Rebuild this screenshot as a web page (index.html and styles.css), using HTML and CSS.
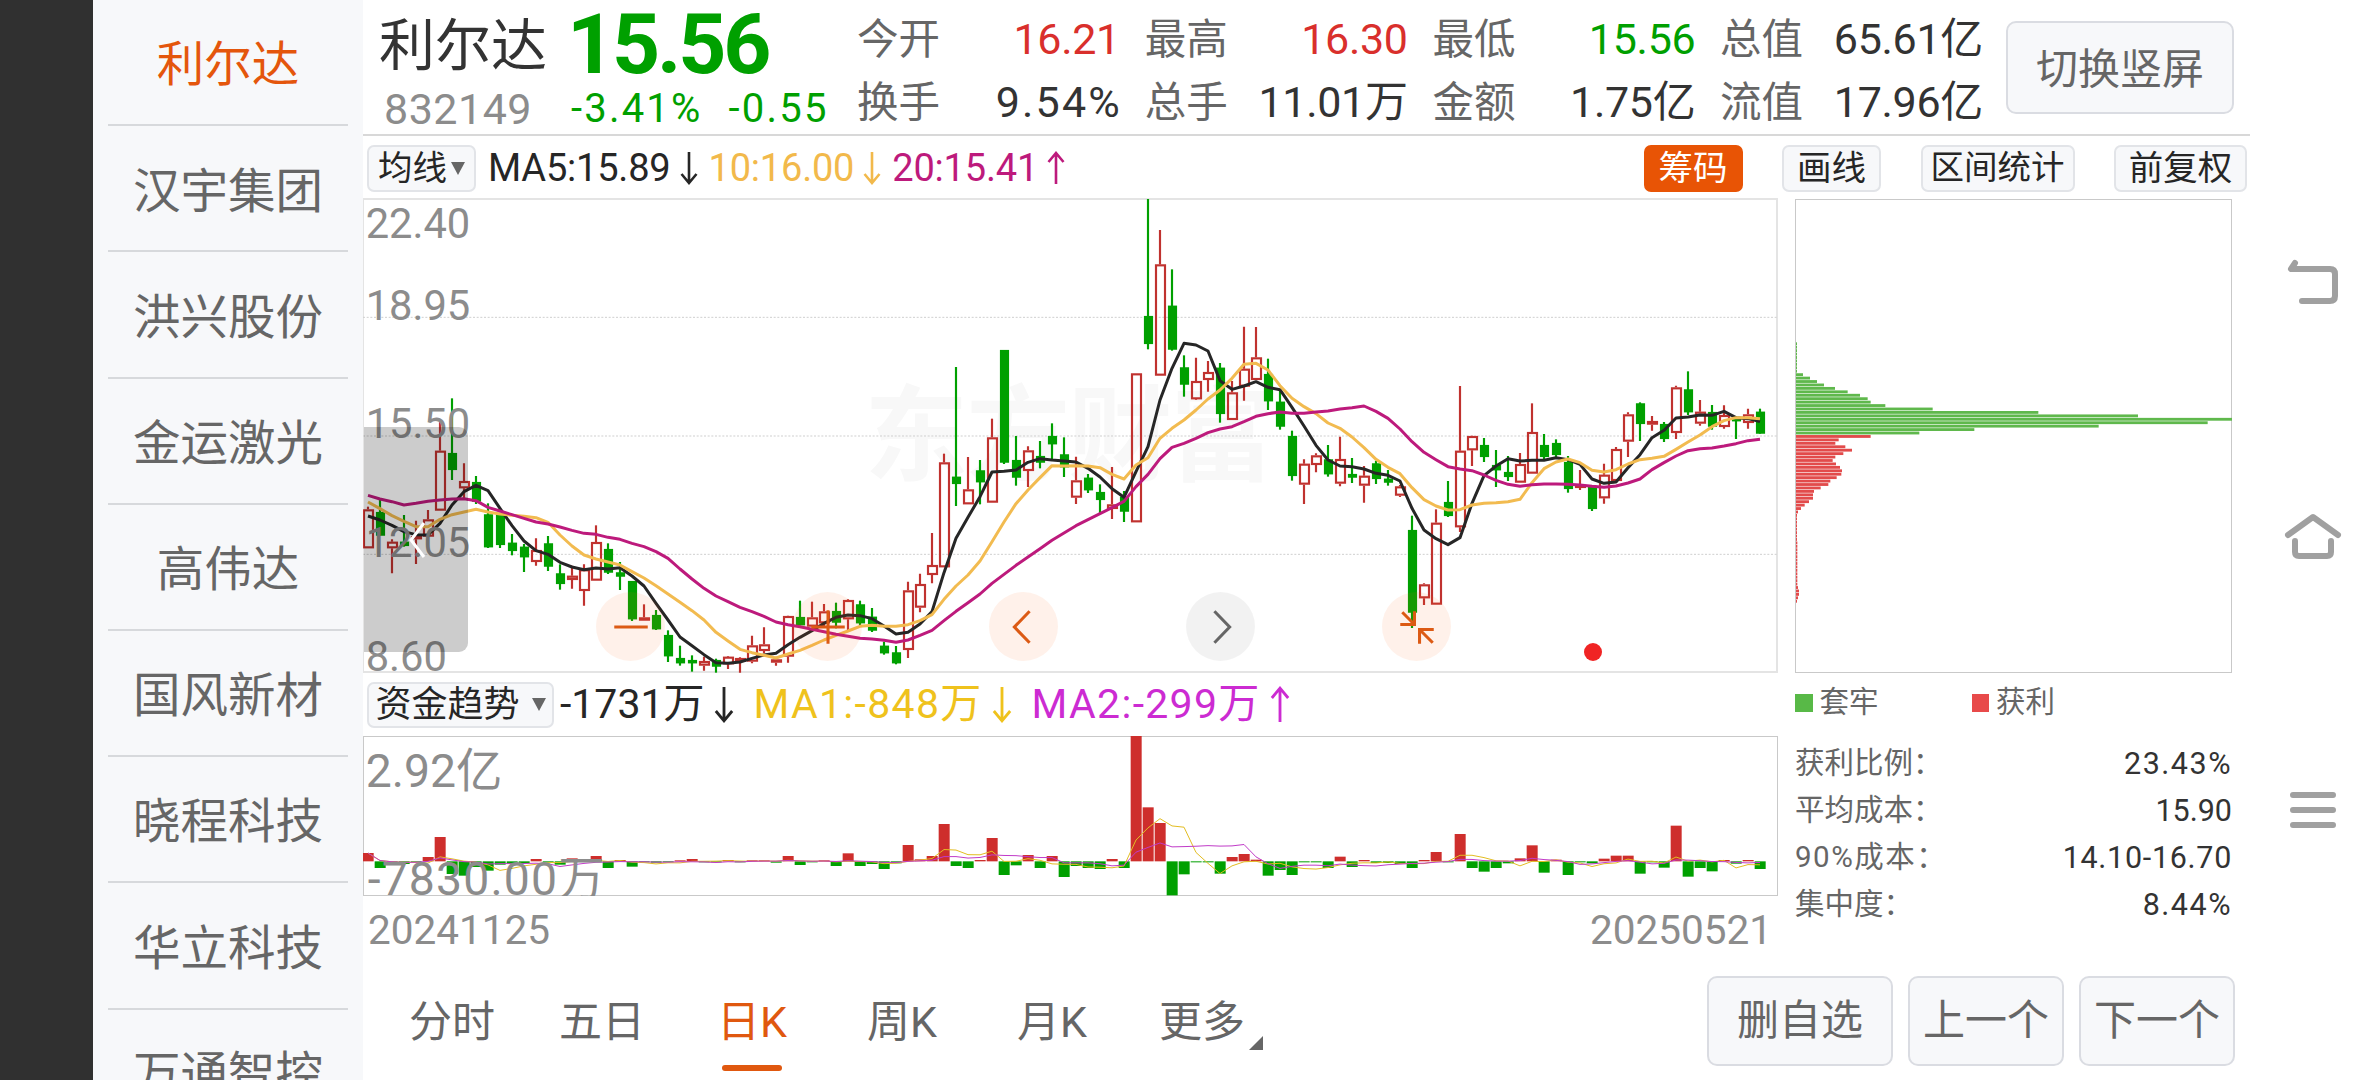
FILE: index.html
```html
<!DOCTYPE html>
<html lang="zh-CN">
<head>
    <meta charset="UTF-8">
    <meta name="viewport" content="width=device-width, initial-scale=1.0">
    <title>利尔达 832149</title>
    <link rel="stylesheet" href="styles.css">
</head>
<body>
    <svg class="symbols" width="0" height="0">
        <symbol id="down" viewBox="0 0 18 34"><path d="M9 1v31M1.5 23L9 32l7.500-9" fill="none" stroke="currentColor" stroke-width="2.600"/></symbol>
        <symbol id="up" viewBox="0 0 18 34"><path d="M9 33V2M1.500 11L9 2l7.500 9" fill="none" stroke="currentColor" stroke-width="2.600"/></symbol>
    </svg>

    <div class="screen">
        <div class="cutout"></div>

        <ul class="stock-list">
            <li class="active">利尔达</li>
            <li>汉宇集团</li>
            <li>洪兴股份</li>
            <li>金运激光</li>
            <li>高伟达</li>
            <li>国风新材</li>
            <li>晓程科技</li>
            <li>华立科技</li>
            <li>万通智控</li>
        </ul>

        <div class="main">
            <header class="quote">
                <div class="stock">
                    <div class="stock-name">利尔达</div>
                    <div class="stock-code">832149</div>
                </div>
                <div class="price-box green">
                    <div class="price">15.56</div>
                    <div class="change"><span>-3.41%</span><span>-0.55</span></div>
                </div>
                <div class="stats">
                    <div class="stat"><span>今开</span><b class="red">16.21</b></div>
                    <div class="stat"><span>最高</span><b class="red">16.30</b></div>
                    <div class="stat"><span>最低</span><b class="green">15.56</b></div>
                    <div class="stat"><span>总值</span><b>65.61亿</b></div>
                    <div class="stat"><span>换手</span><b class="percent">9.54%</b></div>
                    <div class="stat"><span>总手</span><b>11.01万</b></div>
                    <div class="stat"><span>金额</span><b>1.75亿</b></div>
                    <div class="stat"><span>流值</span><b>17.96亿</b></div>
                </div>
                <button class="btn btn-rotate">切换竖屏</button>
            </header>

            <div class="toolbar">
                <button class="tag tag-ma">均线<i class="caret"></i></button>
                <div class="ma-values">
                    <span class="ma5">MA5:15.89<svg class="arrow"><use href="#down"/></svg></span>
                    <span class="ma10">10:16.00<svg class="arrow"><use href="#down"/></svg></span>
                    <span class="ma20">20:15.41<svg class="arrow"><use href="#up"/></svg></span>
                </div>
                <div class="tools">
                    <button class="tag tag-on">筹码</button>
                    <button class="tag tag-draw">画线</button>
                    <button class="tag tag-range">区间统计</button>
                    <button class="tag tag-adjust">前复权</button>
                </div>
            </div>

            <div class="content">
                <div class="charts">
                    <div class="kline">
                        <svg id="kline" viewBox="0 0 4242 1428"></svg>
                        <div class="drawer">
                            <svg viewBox="0 0 20 40"><path d="M17 3L4 20l13 17" fill="none" stroke="#fff" stroke-width="3"/></svg>
                        </div>
                        <div class="controls">
                            <span class="round"><svg viewBox="0 0 68 68"><path d="M18 34.500h33"/></svg></span>
                            <span class="round"><svg viewBox="0 0 68 68"><path d="M18 34.500h33M34.500 18v33"/></svg></span>
                            <span class="round"><svg viewBox="0 0 68 68"><path d="M40 19L25 34.500 40 50"/></svg></span>
                            <span class="round round-off"><svg viewBox="0 0 68 68"><path d="M28 19l15 15.500L28 50"/></svg></span>
                            <span class="round"><svg viewBox="0 0 68 68"><path d="M20 20l12 12M18 32h14V19M50 50L37 37M51 37H37v14"/></svg></span>
                        </div>
                        <span class="event-dot"></span>
                    </div>

                    <div class="fund-bar">
                        <button class="tag tag-fund">资金趋势<i class="caret"></i></button>
                        <div class="fund-values">
                            <span>-1731万<svg class="arrow"><use href="#down"/></svg></span>
                            <span class="fund-ma1">MA1:-848万<svg class="arrow"><use href="#down"/></svg></span>
                            <span class="fund-ma2">MA2:-299万<svg class="arrow"><use href="#up"/></svg></span>
                        </div>
                    </div>

                    <div class="fund">
                        <svg id="fund" viewBox="0 0 4242 480"></svg>
                    </div>
                    <div class="dates"><span>20241125</span><span>20250521</span></div>
                </div>

                <aside class="chips">
                    <div class="chips-chart"><svg id="chips" viewBox="0 0 1308 1419"></svg></div>
                    <div class="legend">
                        <span><i class="dot-green"></i>套牢</span>
                        <span><i class="dot-red"></i>获利</span>
                    </div>
                    <dl class="chips-info">
                        <div><dt>获利比例：</dt><dd class="percent">23.43%</dd></div>
                        <div><dt>平均成本：</dt><dd>15.90</dd></div>
                        <div><dt class="percent">90%成本：</dt><dd class="range">14.10-16.70</dd></div>
                        <div><dt>集中度：</dt><dd class="percent">8.44%</dd></div>
                    </dl>
                </aside>
            </div>

            <footer class="footer">
                <nav class="tabs">
                    <a>分时</a>
                    <a>五日</a>
                    <a class="active">日K</a>
                    <a>周K</a>
                    <a>月K</a>
                    <a class="more">更多</a>
                </nav>
                <div class="actions">
                    <button class="btn btn-del">删自选</button>
                    <button class="btn">上一个</button>
                    <button class="btn">下一个</button>
                </div>
            </footer>
        </div>

        <div class="sys-nav">
            <svg class="key-back" viewBox="0 0 60 60"><path d="M12 11L8 17h39q5 0 5 5v22q0 5-5 5H19"/></svg>
            <svg class="key-home" viewBox="0 0 60 60"><path d="M5 29L30 11l25 18M12 35v11q0 4 4 4h28q4 0 4-4V35"/></svg>
            <svg class="key-menu" viewBox="0 0 60 60"><path d="M10 15h40M10 30h40M10 45h40"/></svg>
        </div>
    </div>

    <script src="charts.js"></script>
</body>
</html>
```
FILE: styles.css
```css
* {
    box-sizing: border-box;
}
body {
    margin: 0;
    background: #fff;
    color: #333;
    font-family: Roboto, "Noto Sans CJK SC", sans-serif;
    line-height: 1;
    overflow: hidden;
}
button {
    font-family: inherit;
    line-height: 1;
    padding: 0;
}
.symbols {
    display: block;
}
.screen {
    display: flex;
    width: 2376px;
    height: 1080px;
    overflow: hidden;
}
.cutout {
    width: 93px;
    background: #303030;
}
.red {
    color: #d92f2c;
}
.green {
    color: #00a000;
}

/* left stock list */
.stock-list {
    width: 270px;
    margin: 0;
    padding: 0 15px;
    list-style: none;
    background: #f7f8fa;
}
.stock-list li {
    height: 126.200px;
    display: flex;
    align-items: center;
    justify-content: center;
    padding-top: 8px;
    border-bottom: 2px solid #d7d9dc;
    font-size: 47.500px;
    color: #666;
}
.stock-list .active {
    color: #e4560c;
}

.main {
    width: 1887px;
    display: flex;
    flex-direction: column;
}

/* quote header */
.quote {
    height: 136px;
    display: flex;
    border-bottom: 2px solid #d8d8d8;
}
.stock {
    width: 200px;
    padding: 17px 0 0 16px;
}
.stock-name {
    font-size: 56px;
    line-height: 58px;
    white-space: nowrap;
}
.stock-code {
    margin: 13px 0 0 5px;
    font-size: 43px;
    letter-spacing: 0.500px;
    color: #8c8c8c;
}
.price-box {
    width: 294px;
    padding: 2px 0 0 4px;
}
.price {
    font-size: 84px;
    line-height: 86px;
    font-weight: 700;
    letter-spacing: -3.200px;
}
.change {
    display: flex;
    gap: 26px;
    margin: 1px 0 0 4px;
    font-size: 40px;
    letter-spacing: 2.200px;
    white-space: nowrap;
}
.stats {
    display: grid;
    grid-template-columns: repeat(4, 263px);
    grid-template-rows: 63px 63px;
    column-gap: 24.700px;
    padding-top: 8px;
}
.stat {
    display: flex;
    align-items: center;
    justify-content: space-between;
}
.stat span {
    font-size: 41.500px;
    color: #666;
}
.stat b {
    font-size: 43px;
    font-weight: 400;
    letter-spacing: -0.300px;
}
.stat .percent {
    letter-spacing: 2.200px;
    margin-right: -2px;
}
.btn {
    border: 2px solid #dadce2;
    border-radius: 10px;
    background: #f7f8fa;
    color: #666;
    font-size: 42px;
}
.btn-rotate {
    width: 228px;
    height: 93px;
    margin: 21px 0 0 23px;
    padding-top: 5px;
}

/* indicator toolbar */
.toolbar {
    height: 62px;
    display: flex;
    align-items: center;
    padding: 2px 3px 0 4px;
}
.tag {
    height: 47px;
    display: flex;
    align-items: center;
    justify-content: center;
    border: 2px solid #e2e4e8;
    border-radius: 7px;
    background: #f7f8fa;
    color: #262626;
    font-size: 34.500px;
    white-space: nowrap;
}
.tag-on {
    width: 99px;
    border-color: #e85405;
    background: #e85405;
    color: #fff;
}
.tag-ma {
    width: 109px;
    gap: 4px;
}
.tag-draw {
    width: 99px;
}
.tag-range {
    width: 154px;
    font-size: 33.500px;
}
.tag-adjust {
    width: 133px;
}
.caret {
    border: 7.500px solid transparent;
    border-top: 13px solid #666;
    border-bottom: 0;
}
.ma-values {
    display: flex;
    gap: 11px;
    margin-left: 12px;
    font-size: 38px;
    letter-spacing: -0.200px;
}
.ma-values span,
.fund-values span {
    display: flex;
    align-items: center;
    gap: 9px;
    white-space: nowrap;
}
.arrow {
    width: 18px;
    height: 34px;
}
.ma5 {
    color: #262626;
}
.ma10 {
    color: #f2b94b;
}
.ma20 {
    color: #bd1a7c;
}
.tools {
    display: flex;
    gap: 39.500px;
    margin-left: auto;
}

.content {
    display: flex;
    gap: 17px;
}
.charts {
    width: 1415px;
}
.kline {
    position: relative;
    height: 475px;
    border: 2px solid #e4e4e4;
    border-left-width: 1px;
}
.kline > svg,
.fund > svg {
    display: block;
    width: 1414px;
    margin: -2px 0 0 -1px;
}

/* collapsed drawer over the left edge of the chart */
.drawer {
    position: absolute;
    left: 0;
    top: 227px;
    width: 104px;
    height: 225px;
    border-radius: 0 9px 9px 0;
    background: rgba(0, 0, 0, 0.2);
}
.drawer svg {
    position: absolute;
    left: 43px;
    top: 93px;
    width: 20px;
    height: 40px;
}
.controls {
    position: absolute;
    left: 232px;
    top: 392px;
    display: flex;
    gap: 127.600px;
}
.round {
    width: 69px;
    height: 69px;
    border-radius: 50%;
    background: rgba(250, 100, 20, 0.090);
    color: #dc5a14;
}
.round-off {
    background: rgba(0, 0, 0, 0.050);
    color: #666;
}
.round svg {
    display: block;
    fill: none;
    stroke: currentColor;
    stroke-width: 3;
}
.event-dot {
    position: absolute;
    left: 1220px;
    top: 443px;
    width: 18px;
    height: 18px;
    border-radius: 50%;
    background: #f02424;
}

/* fund trend */
.fund-bar {
    height: 63px;
    display: flex;
    align-items: center;
    padding: 0 4px;
}
.tag-fund {
    width: 187px;
    height: 46px;
    gap: 12px;
    font-size: 36px;
}
.fund-values {
    display: flex;
    gap: 20px;
    margin-left: 6px;
    font-size: 41px;
    color: #262626;
}
.fund-values .arrow {
    width: 20px;
    height: 37px;
}
.fund-ma1 {
    color: #efc21c;
    letter-spacing: 1.300px;
}
.fund-ma2 {
    color: #cc2bd2;
    letter-spacing: 1.300px;
}
.fund {
    height: 160px;
    border: 1px solid #c9c9c9;
}
.fund > svg {
    margin: -1px 0 0 -1px;
}
.dates {
    display: flex;
    justify-content: space-between;
    padding: 14px 6px 0 5px;
    font-size: 40.500px;
    color: #8c8c8c;
}

/* chip distribution */
.chips {
    width: 437px;
    padding-top: 1px;
}
.chips-chart {
    height: 474px;
    border: 1px solid #c9c9c9;
}
.chips-chart svg {
    display: block;
    width: 436px;
}
.legend {
    display: flex;
    gap: 93px;
    margin-top: 15px;
    font-size: 29.500px;
    color: #666;
}
.legend span {
    display: flex;
    align-items: center;
    gap: 7px;
}
.legend i {
    width: 17.500px;
    height: 17.500px;
}
.dot-green {
    background: #58b947;
}
.dot-red {
    background: #e84a4a;
}
.chips-info {
    margin: 23px 0 0;
}
.chips-info div {
    height: 47px;
    display: flex;
    align-items: center;
    justify-content: space-between;
}
.chips-info dt {
    font-size: 29.500px;
    color: #666;
}
.chips-info dd {
    margin: 0;
    font-size: 30.500px;
}
.chips-info .percent {
    letter-spacing: 1.500px;
}
.chips-info .range {
    letter-spacing: 0.700px;
}

/* period tabs and actions */
.footer {
    height: 104px;
    display: flex;
    justify-content: space-between;
    margin-top: auto;
    padding: 0 15px 0 14px;
}
.tabs {
    display: flex;
}
.tabs a {
    position: relative;
    width: 150px;
    height: 92px;
    display: flex;
    align-items: center;
    justify-content: center;
    font-size: 43px;
    color: #666;
}
.tabs .active {
    color: #e0580f;
}
.tabs .active::after {
    content: "";
    position: absolute;
    left: 45px;
    bottom: -3px;
    width: 60px;
    height: 6px;
    border-radius: 3px;
    background: #e0580f;
}
.tabs .more::after {
    content: "";
    position: absolute;
    right: 14px;
    bottom: 18px;
    border-left: 14px solid transparent;
    border-bottom: 14px solid #666;
}
.actions {
    display: flex;
    gap: 15px;
}
.actions .btn {
    width: 156px;
    height: 90px;
}
.actions .btn-del {
    width: 186px;
}

/* system navigation keys */
.sys-nav {
    width: 126px;
    display: flex;
    flex-direction: column;
    align-items: center;
}
.sys-nav svg {
    width: 60px;
    height: 60px;
    flex: none;
    fill: none;
    stroke: #a0a0a0;
    stroke-width: 6;
    stroke-linecap: round;
    stroke-linejoin: round;
}
.key-back {
    margin-top: 252px;
}
.key-home {
    margin-top: 194px;
}
.key-menu {
    margin-top: 214px;
}

/* chart parts, units are a third of a pixel */
.grid {
    stroke: #cfcfcf;
    stroke-width: 3;
    stroke-dasharray: 6 5;
}
.watermark {
    font: 700 312px "Noto Sans CJK SC", sans-serif;
    fill: #f8f8f8;
}
.axis {
    font-size: 125px;
    fill: #8c8c8c;
}
.fund-axis {
    font-size: 139px;
    fill: #8c8c8c;
}
.fund-low {
    letter-spacing: 3.500px;
}
.up {
    fill: none;
    stroke: #c0322f;
    stroke-width: 6.500px;
}
.down {
    fill: #00a000;
    stroke: #00a000;
    stroke-width: 6.500px;
}
.line {
    fill: none;
    stroke-width: 9px;
    stroke-linejoin: round;
}
.line-thin {
    fill: none;
    stroke-width: 3px;
}
```
FILE: charts.js
```javascript
const NS = "http://www.w3.org/2000/svg";
const STEP = 36;
const FIRST = 15;

function add(parent, tag, attrs, text) {
    const el = document.createElementNS(NS, tag);
    for (const key in attrs) el.setAttribute(key, attrs[key]);
    if (text) el.textContent = text;
    parent.appendChild(el);
    return el;
}

function xAt(i) {
    return FIRST + i * STEP;
}

// [type, high, body top, body bottom, low], every block has its own base offset
const candles = [
    { base: 546, rows: [
        ["r",380,388,505,505],["g",360,396,467,467],["r",478,485,505,580],["g",405,485,498,500],
        ["r",422,468,478,552],["r",390,418,470,470],["r",126,212,392,392],["g",55,219,270,300],
        ["r",250,303,325,360],["g",288,306,365,372],["g",370,403,502,504],["g",400,403,495,504],
        ["g",462,488,513,526],["g",492,500,532,576],["r",475,510,546,557],["g",468,490,560,573],
        ["g",553,580,612,629],["r",557,587,600,626],["r",553,568,633,677],["r",436,486,602,602],
        ["g",490,507,578,582],["g",546,577,590,630],["g",603,603,718,723],["r",673,712,722,722],
        ["g",690,705,748,750],["g",751,765,829,846],["g",797,834,850,857],["g",826,840,850,875],
        ["r",830,843,857,872],["g",836,840,860,878],["r",828,830,853,867],["r",832,834,845,878]
    ] },
    { base: 396, rows: [
        ["r",917,946,995,1000],["r",892,943,963,970],["r",980,988,998,1007],["r",857,858,980,998],
        ["g",812,861,886,886],["r",815,862,890,890],["r",822,844,880,890],["g",818,843,878,895],
        ["r",808,810,868,905],["g",812,823,880,888],["g",834,860,902,906],["g",935,947,970,974],
        ["g",948,967,1000,1003],["r",755,781,960,984],["r",731,762,833,847],["r",609,705,735,760],
        ["r",371,397,712,712],["g",111,440,462,528],["r",381,478,523,523],["g",390,421,457,523],
        ["r",266,322,518,518],["g",60,60,398,402],["g",318,390,443,467],["r",349,361,423,471],
        ["g",333,378,398,415],["g",280,318,343,390],["g",322,373,412,441],["r",380,451,503,522],
        ["g",432,443,481,489],["g",463,486,510,550],["r",411,523,537,567],["g",483,500,545,576],
        ["r",130,130,577,577]
    ] },
    { base: -24, rows: [
        ["g",27,378,462,478],["r",120,223,557,557],["g",238,347,479,482],["g",496,532,584,620],
        ["r",503,573,628,630],["r",513,546,570,605],["g",519,533,672,698],["r",573,607,690,690],
        ["r",410,536,590,632],["r",411,502,570,570],["g",506,552,634,660],["g",600,635,710,719],
        ["g",722,738,858,872],["r",808,821,884,942],["r",790,796,825,847],["g",765,808,853,860],
        ["r",740,807,881,889],["g",804,852,863,879],["r",828,857,887,938],["g",812,820,867,882],
        ["g",840,866,878,887],["r",885,889,917,921],["g",977,1020,1268,1314],["r",1180,1183,1225,1245]
    ] },
    { base: 456, rows: [
        ["r",478,518,764,764],["g",393,456,498,501],["r",108,302,532,546],["r",257,258,301,348],
        ["g",264,285,321,336],["g",300,345,361,411],["g",318,366,381,393],["r",309,342,398,398],
        ["r",160,246,371,371],["g",252,285,321,327],["g",268,279,315,325],["g",318,336,417,428],
        ["r",360,405,413,420],["g",405,408,477,483],["r",341,374,445,461],["r",291,297,393,397],
        ["r",187,193,275,321],["g",157,160,222,273],["r",198,213,224,242],["g",216,222,267,276],
        ["r",107,112,249,267],["g",64,118,187,195],["r",150,185,221,227],["g",165,186,230,239],
        ["r",166,195,231,236],["g",200,205,212,267],["r",176,193,219,236],["g",176,185,251,251]
    ] }
];

const averages = [
    { color: "#262626", parts: [
        [546, [408,420,436,455,464,465,430,375,335,316,332,385,437,483,512,523,547,561,569,564,567,563,588,618,670,720,771,797,824,848,850,846]],
        [396, [985,975,970,944,922,902,880,862,855,857,866,888,912,907,882,845,728,625,562,500,426,424,420,397,386,390,393,396,415,441,476,502,425]],
        [-24, [770,630,535,460,465,483,572,598,588,575,592,599,652,708,766,810,828,830,837,850,856,873,955,1020]],
        [456, [566,584,563,460,377,348,326,333,331,331,323,329,343,387,400,396,353,314,263,241,204,201,195,196,184,203,206,215]]
    ] },
    { color: "#f2bb50", parts: [
        [546, [366,386,407,424,440,440,418,404,396,388,396,402,406,409,413,427,465,498,525,537,546,555,575,594,617,642,667,692,720,757,783,808]],
        [396, [968,976,984,972,961,946,930,916,903,889,886,889,889,884,872,854,808,768,735,693,635,576,521,480,443,407,408,407,408,413,433,447,405]],
        [-24, [803,745,715,690,660,627,600,565,523,520,540,587,625,650,671,699,715,741,773,808,832,851,893,929]],
        [456, [468,480,479,465,460,458,455,448,398,356,336,327,338,361,366,359,342,329,325,319,298,276,255,230,212,203,203,206]]
    ] },
    { color: "#bd1a7c", parts: [
        [546, [346,357,365,375,370,364,360,357,356,362,382,393,404,415,426,432,441,451,460,463,472,478,490,500,515,535,567,597,625,648,665,682]],
        [396, [845,859,876,884,890,898,905,913,919,925,927,931,937,930,916,901,872,844,818,792,760,733,706,681,656,631,609,587,569,551,533,514,470]],
        [-24, [853,806,772,760,745,728,717,710,695,679,671,666,670,670,666,663,657,653,648,664,685,717,755,787]],
        [456, [329,350,357,362,375,391,403,409,404,402,402,403,405,409,412,408,399,387,359,338,318,302,296,294,288,281,272,268]]
    ] }
];

function drawKline() {
    const svg = document.getElementById("kline");
    add(svg, "text", { x: 1504, y: 825, class: "watermark", textLength: 1230 }, "东方财富");
    [358, 714, 1069].forEach(y => add(svg, "line", { x1: 0, x2: 4242, y1: y, y2: y, class: "grid" }));

    let i = 0;
    candles.forEach(block => block.rows.forEach(([type, high, top, bottom, low]) => {
        const x = xAt(i++);
        const b = block.base;
        const cls = type === "r" ? "up" : "down";
        if (type === "r") {
            add(svg, "path", { class: cls, d: `M${x} ${high + b}V${top + b}M${x} ${bottom + b}V${low + b}` });
            add(svg, "rect", { class: cls, x: x - 12, y: top + b + 3, width: 27, height: Math.max(bottom - top - 6, 3) });
        } else {
            add(svg, "path", { class: cls, d: `M${x} ${high + b}V${low + b}` });
            add(svg, "rect", { class: cls, x: x - 9, y: top + b + 3, width: 21, height: Math.max(bottom - top - 6, 3) });
        }
    }));

    averages.forEach(line => {
        const ys = line.parts.flatMap(([base, values]) => values.map(v => v + base));
        const points = ys.map((y, n) => `${xAt(n)},${y}`).join(" ");
        add(svg, "polyline", { class: "line", points: points, stroke: line.color });
    });

    const labels = [["22.40", 121], ["18.95", 366], ["15.50", 720], ["12.05", 1076], ["8.60", 1419]];
    labels.forEach(([text, y]) => add(svg, "text", { x: 8, y: y, class: "axis" }, text));
}

const flows = [
    25,-20,-9,-8,-2,13,73,-38,-43,-17,-28,-10,-8,-5,7,-3,-10,9,3,16,
    -20,4,-16,-3,-4,-3,3,7,-2,-2,4,-3,3,3,-4,16,-11,-1,3,-14,
    24,-14,-8,-23,-6,49,6,16,112,-14,-20,4,70,-41,-12,19,-20,16,-47,-14,
    -20,-23,7,-20,376,162,115,-102,-39,-3,-2,-37,13,22,5,-43,-26,-41,-3,-3,
    -20,14,-17,4,-5,-5,-8,-20,4,28,-3,82,-20,-31,-20,-6,9,48,-34,5,
    -41,-2,-6,8,17,17,-37,-3,-19,107,-46,-20,-30,4,-7,4,-23
];

function average(values, end, size) {
    const part = values.slice(Math.max(0, end - size + 1), end + 1);
    return part.reduce((a, b) => a + b, 0) / part.length;
}

function drawFund() {
    const svg = document.getElementById("fund");
    const zero = 376;
    flows.forEach((v, i) => {
        add(svg, "rect", {
            x: xAt(i) - 16,
            y: v > 0 ? zero - v : zero,
            width: 33,
            height: Math.max(Math.abs(v), 3),
            fill: v > 0 ? "#ce2e2c" : "#00a000"
        });
    });
    [[5, "#e3bd22"], [10, "#c13bc8"]].forEach(([size, color]) => {
        const points = flows.map((v, i) => `${xAt(i)},${zero - average(flows, i, size)}`).join(" ");
        add(svg, "polyline", { class: "line-thin", points: points, stroke: color });
    });
    add(svg, "text", { x: 8, y: 152, class: "fund-axis" }, "2.92亿");
    add(svg, "text", { x: 14, y: 477, class: "fund-axis fund-low" }, "-7830.00万");
}

const trapped = [3,3,3,3,3,3,3,3,3,21,42,63,84,117,155,192,215,224,268,410,727,1026,1308,1235,908,535,370];
const profit = [
    224,128,118,148,168,142,118,110,120,132,138,136,122,103,97,74,54,51,51,39,26,15,6,
    3,3,3,3,3,3,3,3,4,4,4,4,4,4,4,4,4,4,4,4,4,6,9,9,6,3
];

function drawChips() {
    const svg = document.getElementById("chips");
    trapped.concat(profit).forEach((w, i) => {
        const color = i < trapped.length ? "#5fb84c" : "#e24b4b";
        add(svg, "rect", { x: 0, y: 427 + i * 10.3, width: w, height: 8.5, fill: color });
    });
}

drawKline();
drawFund();
drawChips();
```
